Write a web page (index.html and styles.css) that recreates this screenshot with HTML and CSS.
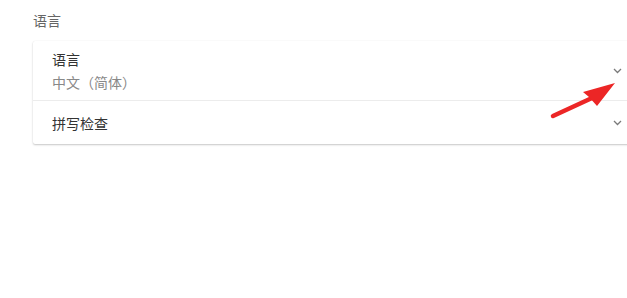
FILE: index.html
```html
<!DOCTYPE html>
<html lang="zh-CN">
<head>
  <meta charset="UTF-8">
  <title>语言</title>
  <link rel="stylesheet" href="styles.css">
</head>
<body>
  <div class="page">
    <h2 class="section-title">语言</h2>
    <div class="card">
      <div class="row row-tall">
        <div class="row-text">
          <div class="row-label">语言</div>
          <div class="row-sub">中文（简体）</div>
        </div>
        <svg class="chevron" width="9" height="6" viewBox="0 0 9 6"><path d="M1 1 L4.5 4.5 L8 1" fill="none" stroke="#7a7a7a" stroke-width="1.3"/></svg>
      </div>
      <div class="row">
        <div class="row-label">拼写检查</div>
        <svg class="chevron" width="9" height="6" viewBox="0 0 9 6"><path d="M1 1 L4.5 4.5 L8 1" fill="none" stroke="#7a7a7a" stroke-width="1.3"/></svg>
      </div>
    </div>
  </div>

  <!-- 红色箭头标注 -->
  <svg class="arrow" width="627" height="298" viewBox="0 0 627 298">
    <line x1="553" y1="116" x2="592" y2="98" stroke="#ec2626" stroke-width="4.5" stroke-linecap="round"/>
    <polygon points="615,83 583,92 589,97 597,106" fill="#ec2626"/>
  </svg>
</body>
</html>
```

FILE: styles.css
```css
body {
  margin: 0;
  font-family: "Noto Sans CJK SC", "Noto Sans", sans-serif;
  background: #fff;
  overflow: hidden;
  width: 627px;
  height: 298px;
  position: relative;
}
.page {
  padding: 10px 0 0 33px;
}
.section-title {
  margin: 0;
  font-size: 14px;
  font-weight: normal;
  line-height: 20px;
  color: #666;
}
.card {
  margin-top: 11px;
  width: 620px;
  background: #fff;
  border-radius: 2px;
  box-shadow: 0 1px 2px rgba(0, 0, 0, 0.22), 0 0 1px rgba(0, 0, 0, 0.08);
}
.row {
  display: flex;
  justify-content: space-between;
  align-items: center;
  height: 43px;
  padding: 0 31px 0 19px;
}
.row-tall {
  height: 60px;
  border-bottom: 1px solid #ececec;
  box-sizing: border-box;
}
.row-label {
  font-size: 14px;
  line-height: 20px;
  color: #333;
}
.row-sub {
  margin-top: 3px;
  font-size: 14px;
  line-height: 20px;
  color: #888;
}
.chevron {
  display: block;
}
.arrow {
  position: absolute;
  left: 0;
  top: 0;
  pointer-events: none;
}
```
